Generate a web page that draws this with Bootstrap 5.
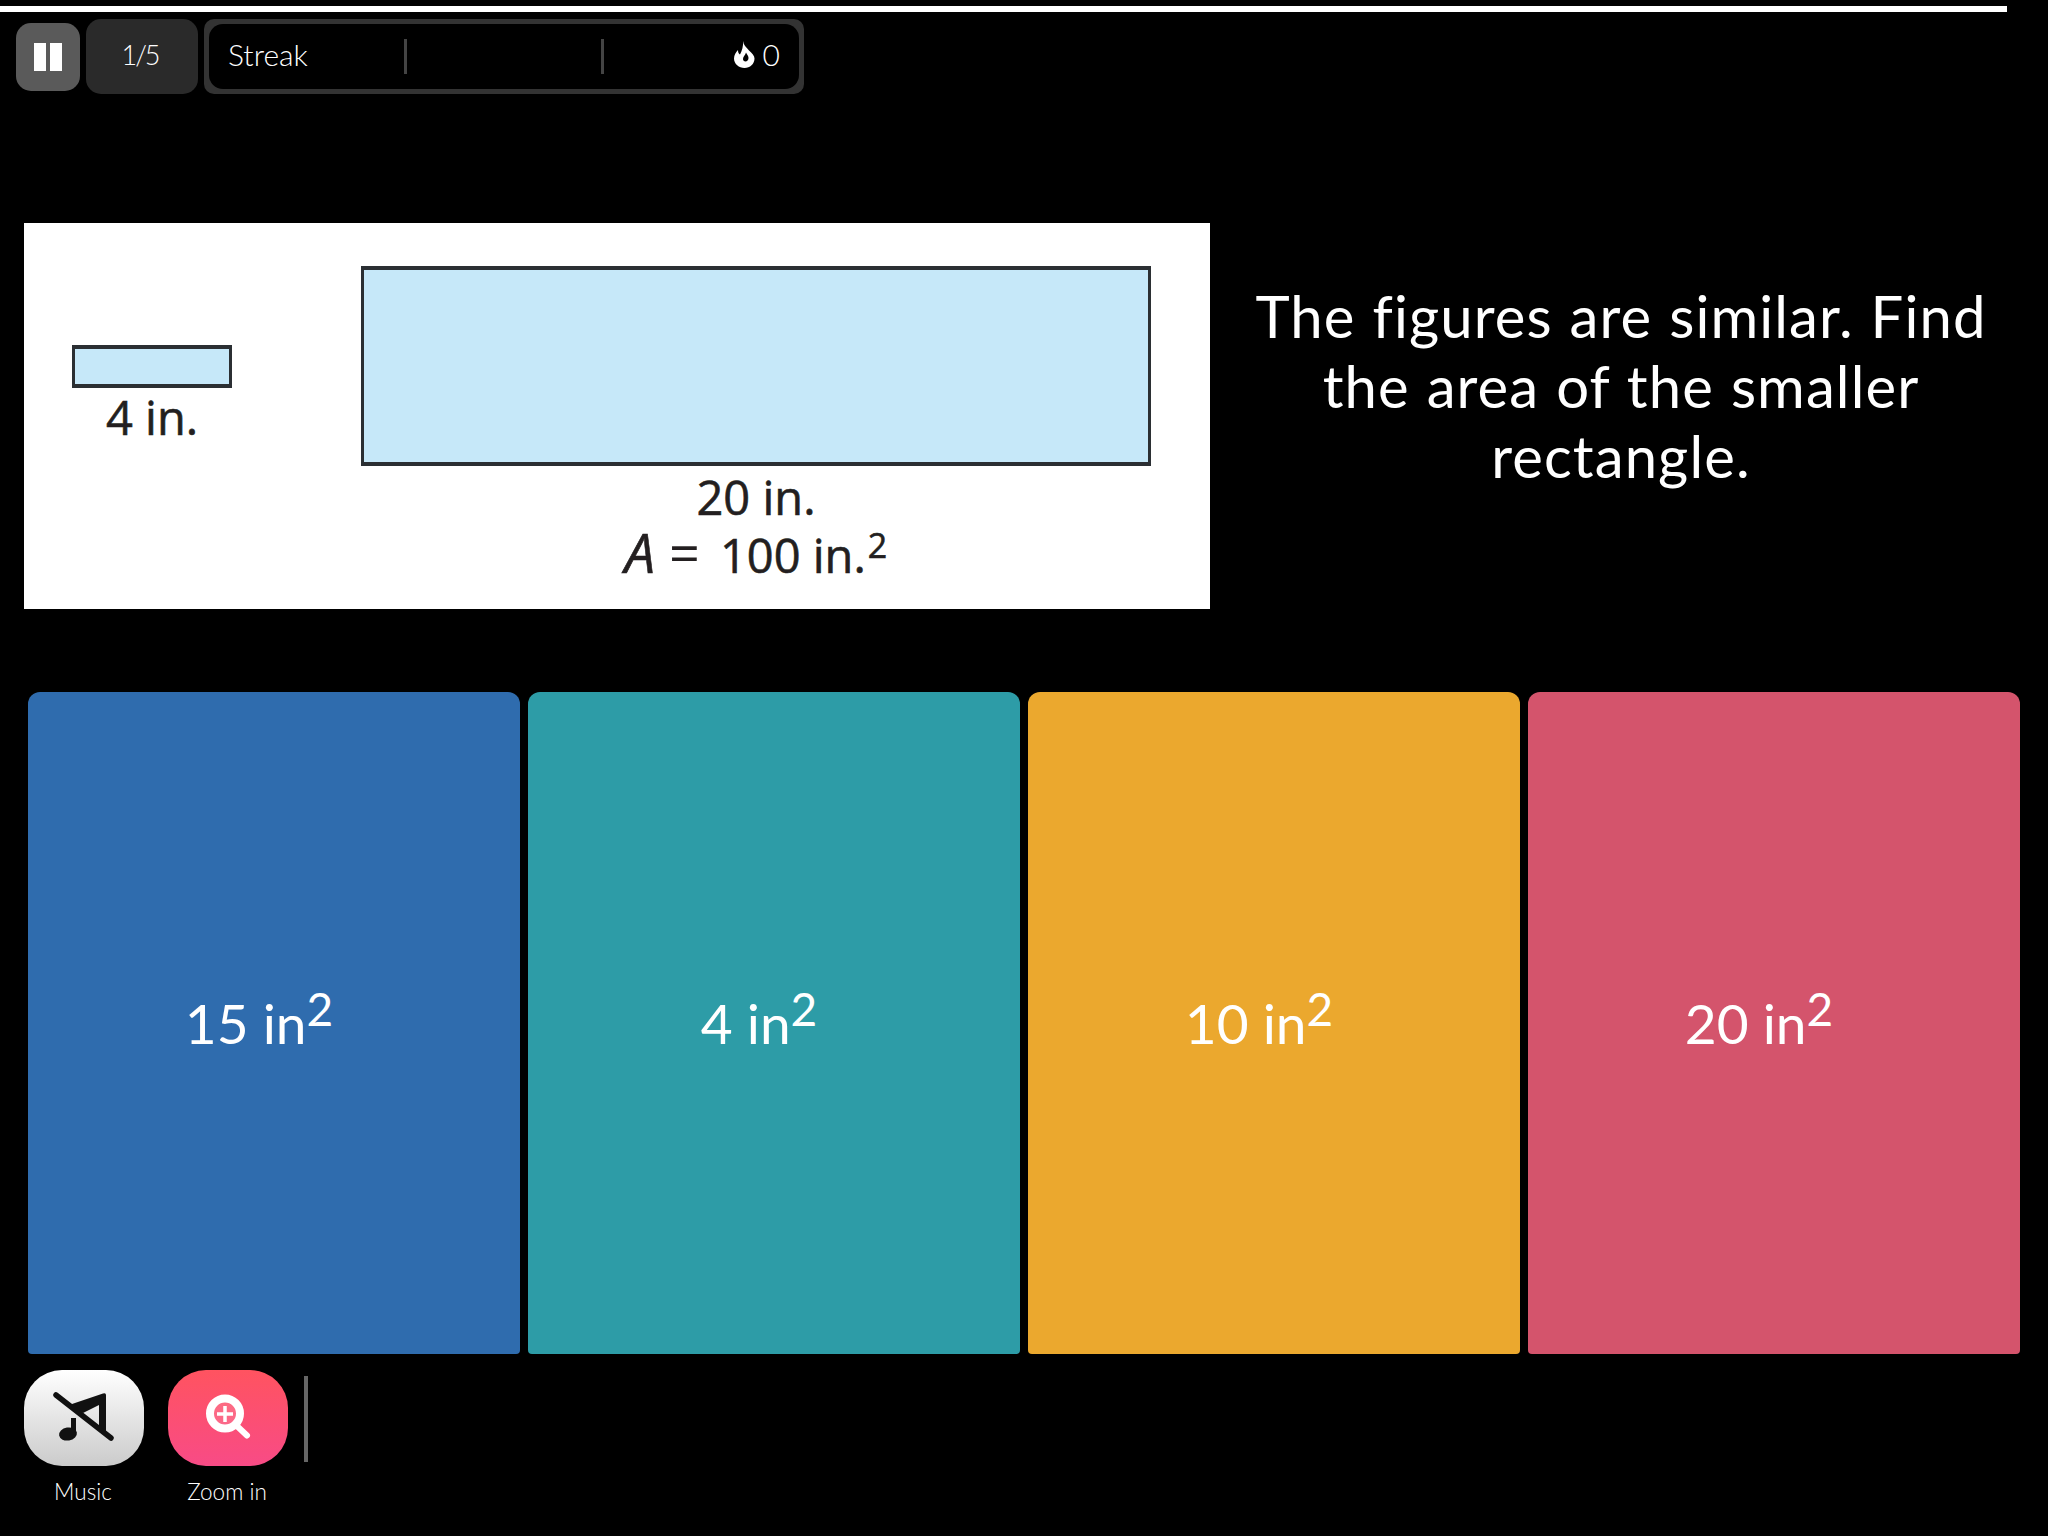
<!DOCTYPE html>
<html lang="en">
<head>
  <meta charset="UTF-8">
  <title>Quiz</title>
  <link href="https://cdn.jsdelivr.net/npm/bootstrap@5.3.0/dist/css/bootstrap.min.css" rel="stylesheet">
  <style>
    html, body { height: 100%; }
    body { background: #000; color: #fff; font-family: "Lato", "Open Sans", sans-serif; overflow: hidden; }
    .prog-bar { width: 2007px; height: 6px; margin-top: 6px; background: #fff; }
    .hud { height: 75px; margin-top: 7px; padding-left: 16px; gap: 6px; }
    .pause-btn { width: 64px; height: 68px; padding: 0; background: #5a5a5a; border: 0; border-radius: 15px; gap: 4px; }
    .pause-bar { width: 12px; height: 28px; background: #fff; }
    .counter { width: 112px; height: 75px; padding: 0 4px 2px 0; background: #2a2a2a; border-radius: 15px; font-size: 27px; font-weight: 300; letter-spacing: -2px; }
    .streak { width: 600px; height: 75px; padding: 5px; background: #333; border-radius: 10px; }
    .streak-inner { height: 100%; background: #000; border-radius: 14px; font-size: 30px; font-weight: 300; }
    .streak-seg { flex: 1 1 0; height: 35px; padding: 0 19px 4px; }
    .streak-seg + .streak-seg { border-left: 3px solid #444; }
    .main-row { margin-top: 129px; padding-left: 24px; height: 386px; }
    .figure-box { width: 1186px; height: 386px; padding-left: 48px; gap: 129px; background: #fff; color: #231f20; font-family: "Open Sans", sans-serif; font-size: 47px; line-height: 55px; -webkit-text-stroke: .6px #231f20; }
    .fig-small { width: 160px; padding-top: 122px; }
    .fig-large { width: 790px; padding-top: 43px; }
    .shape { background: #c6e8f9; border: solid #2b2f33; border-width: 4px 3px; }
    .shape-small { height: 43px; margin-bottom: 2px; }
    .shape-large { height: 200px; margin-bottom: 4px; }
    .fig-eq i { font-size: 54px; margin-right: 14px; }
    .fig-eq .eq-sign { margin-right: 20px; font-size: 54px; line-height: 0; -webkit-text-stroke: 0; }
    .fig-eq sup { font-size: 34px; top: -15px; margin-left: 2px; }
    .question { width: 822px; padding: 58px 40px 0; font-size: 58px; line-height: 70px; letter-spacing: 1.1px; word-spacing: 1px; text-align: center; }
    .answers { margin-top: 83px; padding-left: 28px; height: 662px; gap: 8px; }
    .ans-tile { width: 492px; height: 662px; padding-right: 30px; border-radius: 12px 12px 4px 4px; font-size: 55px; }
    .ans-tile sup { font-size: 46px; top: -18px; line-height: 0; }
    .ans-blue { background: #2f6cae; }
    .ans-teal { background: #2d9ca7; }
    .ans-amber { background: #eba82e; }
    .ans-rose { background: #d4546c; }
    .tools { margin-top: 16px; padding-left: 24px; gap: 24px; }
    .tool { width: 120px; }
    .tool-btn { width: 120px; height: 96px; padding: 0; border: 0; border-radius: 38px; }
    .tool-music { background: linear-gradient(#ffffff, #cbcbcb); }
    .tool-zoom { background: linear-gradient(#ff5360, #f84b86); }
    .tool-label { margin: 12px 2px 0 0; font-size: 22.500px; font-weight: 300; line-height: 28px; }
    .tool-rule { width: 4px; height: 86px; margin: 6px 0 0 -8px; background: #666; }
  </style>
</head>
<body>
  <div class="prog-bar"></div>

  <div class="hud d-flex align-items-center">
    <button class="pause-btn btn d-flex align-items-center justify-content-center" type="button" aria-label="Pause">
      <span class="pause-bar"></span><span class="pause-bar"></span>
    </button>
    <div class="counter d-flex align-items-center justify-content-center">1/5</div>
    <div class="streak">
      <div class="streak-inner d-flex align-items-center">
        <div class="streak-seg d-flex align-items-center">Streak</div>
        <div class="streak-seg"></div>
        <div class="streak-seg d-flex align-items-center justify-content-end gap-2">
          <svg width="21" height="27" viewBox="0 0 21 27">
            <path fill="#fff" fill-rule="evenodd" d="M9 0c.5 4 3 6 6 9.500 3 3 5.500 5 5.500 8C20.500 23 16 27 10.500 27S0 23 0 17.500C0 14 2 11 4 9c0 2 .5 3.500 2 4.500C8 10 9.500 5 9 0ZM12 11.500c-.5 2.500-3 4-3 6.500 0 1.500 1 2.500 2.500 2.500S14.500 19 14.500 17c0-2-1.500-3.500-2.500-5.500Z"/>
          </svg>
          <span>0</span>
        </div>
      </div>
    </div>
  </div>

  <div class="main-row d-flex">
    <div class="figure-box d-flex">
      <div class="fig-small text-center">
        <div class="shape shape-small"></div>
        <div>4 in.</div>
      </div>
      <div class="fig-large text-center">
        <div class="shape shape-large"></div>
        <div>20 in.</div>
        <div class="fig-eq"><i>A</i><span class="eq-sign">=</span>100 in.<sup>2</sup></div>
      </div>
    </div>
    <div class="question">The figures are similar. Find the area of the smaller rectangle.</div>
  </div>

  <div class="answers d-flex">
    <div class="ans-tile ans-blue d-flex align-items-center justify-content-center"><span>15 in<sup>2</sup></span></div>
    <div class="ans-tile ans-teal d-flex align-items-center justify-content-center"><span>4 in<sup>2</sup></span></div>
    <div class="ans-tile ans-amber d-flex align-items-center justify-content-center"><span>10 in<sup>2</sup></span></div>
    <div class="ans-tile ans-rose d-flex align-items-center justify-content-center"><span>20 in<sup>2</sup></span></div>
  </div>

  <div class="tools d-flex">
    <div class="tool text-center">
      <button class="tool-btn tool-music btn d-block" type="button" aria-label="Music">
        <svg width="120" height="96" viewBox="0 0 120 96">
          <path fill="#111" fill-rule="evenodd" d="M48 34 79 23.500Q82 22.500 82 25V65L75 59V35L59 43 48 37Z"/>
          <path fill="#111" d="M47 48h5v16h-5Z"/>
          <ellipse cx="44" cy="64" rx="9" ry="6.500" fill="#111" transform="rotate(-10 44 64)"/>
          <path fill="none" stroke="#111" stroke-width="5.500" stroke-linecap="round" d="M32 25 87 68"/>
        </svg>
      </button>
      <div class="tool-label">Music</div>
    </div>
    <div class="tool text-center">
      <button class="tool-btn tool-zoom btn d-block" type="button" aria-label="Zoom in">
        <svg width="120" height="96" viewBox="0 0 120 96">
          <circle cx="57" cy="43.500" r="15" fill="#fff" fill-opacity=".15" stroke="#fff" stroke-width="8"/>
          <path fill="none" stroke="#fff" stroke-width="6" stroke-linecap="round" d="M70 57 79 65.500"/>
          <path fill="none" stroke="#fff" stroke-width="3.500" d="M57 36v16M49 44h16"/>
        </svg>
      </button>
      <div class="tool-label">Zoom in</div>
    </div>
    <div class="tool-rule"></div>
  </div>
</body>
</html>
